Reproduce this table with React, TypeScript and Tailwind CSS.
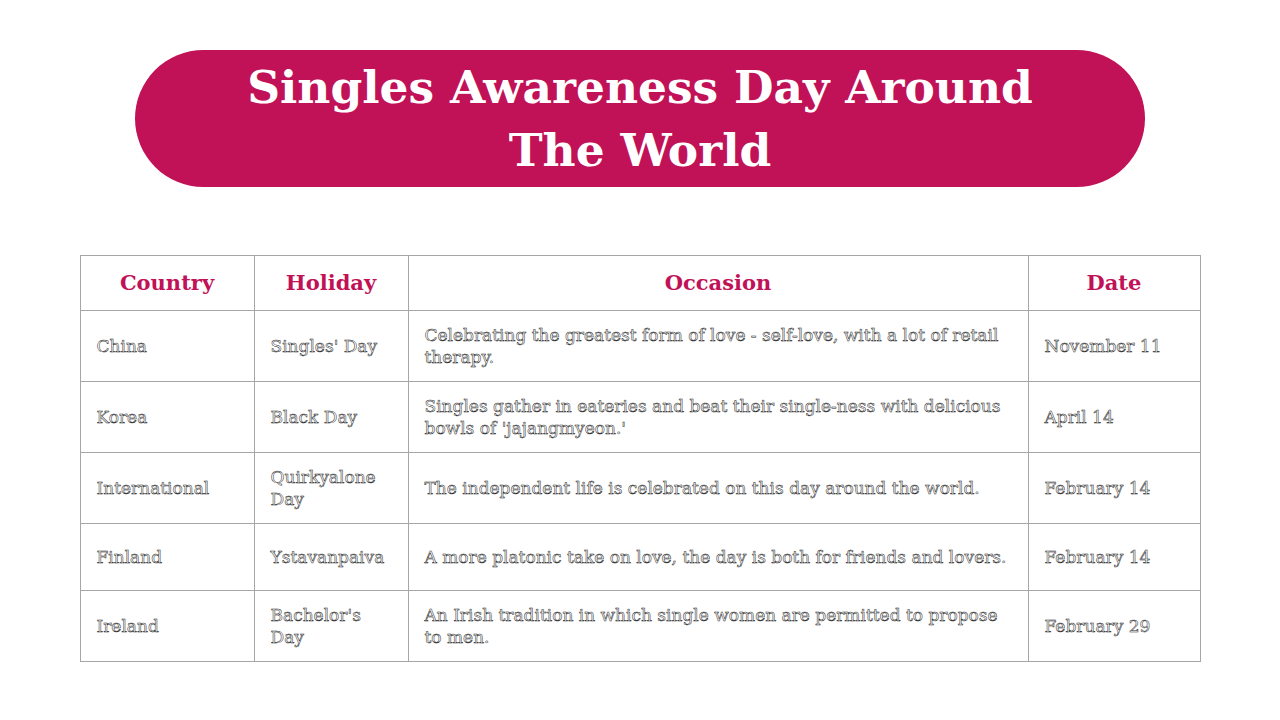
import React from "react";

const rows = [
  { c: "China", h: "Singles' Day", o: "Celebrating the greatest form of love - self-love, with a lot of retail therapy.", d: "November 11", hh: "h-[71px]" },
  { c: "Korea", h: "Black Day", o: "Singles gather in eateries and beat their single-ness with delicious bowls of 'jajangmyeon.'", d: "April 14", hh: "h-[71px]" },
  { c: "International", h: "Quirkyalone Day", o: "The independent life is celebrated on this day around the world.", d: "February 14", hh: "h-[71px]" },
  { c: "Finland", h: "Ystavanpaiva", o: "A more platonic take on love, the day is both for friends and lovers.", d: "February 14", hh: "h-[67px]" },
  { c: "Ireland", h: "Bachelor's Day", o: "An Irish tradition in which single women are permitted to propose to men.", d: "February 29", hh: "h-[71px]" },
];

const body =
  "px-4 align-middle text-[17px] leading-[22px] text-white [-webkit-text-stroke:0.5px_#1a1a1a] border border-[#a6a6a6]";
const head = "text-center align-middle text-[21px] font-bold text-[#c11157] border border-[#a6a6a6]";

export default function App() {
  return (
    <div className="w-[1280px] h-[720px] bg-white overflow-hidden [font-family:'DejaVu_Serif',serif]">
      <div className="pt-[50px] flex justify-center">
        <div className="w-[1010px] h-[137px] rounded-full bg-[#c11157] flex items-center justify-center">
          <h1 className="text-white font-bold text-[45.5px] leading-[63px] text-center w-[900px]">
            Singles Awareness Day Around
            <br />
            The World
          </h1>
        </div>
      </div>
      <div className="mt-[68px] flex justify-center">
        <table className="table-fixed border-collapse w-[1120px]">
          <colgroup>
            <col className="w-[174px]" />
            <col className="w-[154px]" />
            <col className="w-[620px]" />
            <col className="w-[172px]" />
          </colgroup>
          <thead>
            <tr className="h-[55px]">
              <th className={head}>Country</th>
              <th className={head}>Holiday</th>
              <th className={head}>Occasion</th>
              <th className={head}>Date</th>
            </tr>
          </thead>
          <tbody>
            {rows.map((r) => (
              <tr key={r.c} className={r.hh}>
                <td className={body}>{r.c}</td>
                <td className={body}>{r.h}</td>
                <td className={body}>{r.o}</td>
                <td className={body}>{r.d}</td>
              </tr>
            ))}
          </tbody>
        </table>
      </div>
    </div>
  );
}
